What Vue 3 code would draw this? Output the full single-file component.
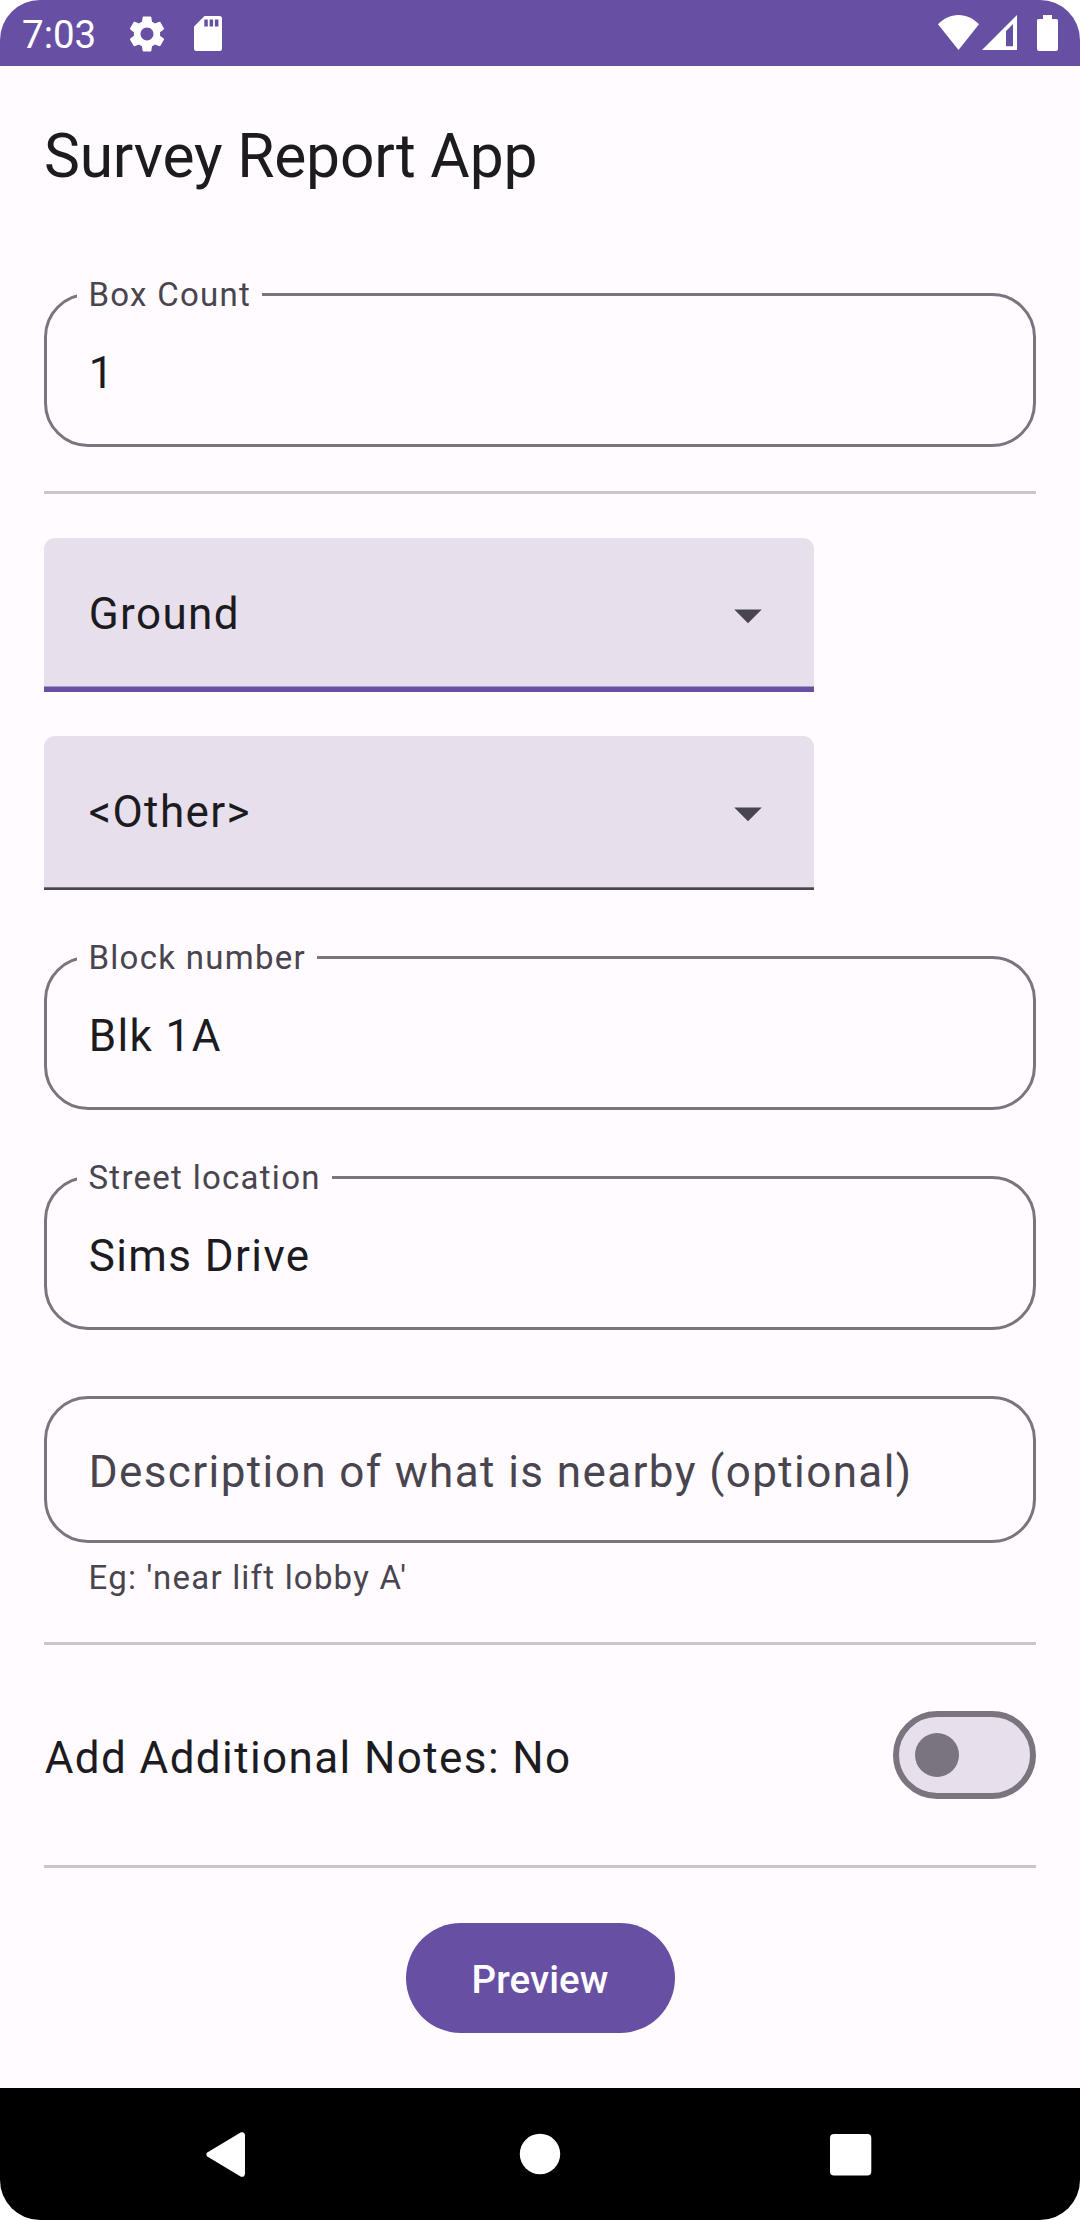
<script setup>
import { ref } from 'vue'

const boxCount = ref('1')
const dropdowns = ref([
  { value: 'Ground', active: true },
  { value: '<Other>', active: false },
])
const address = ref([
  { label: 'Block number', value: 'Blk 1A' },
  { label: 'Street location', value: 'Sims Drive' },
])
const notes = ref(false)
</script>

<template>
  <div class="screen">
    <header class="status">
      <div class="status-left">
        <span class="time">7:03</span>
        <svg class="gear" viewBox="0 0 24 24" width="42" height="42"><path fill="#fff" d="M19.43 12.98c.04-.32.07-.64.07-.98s-.03-.66-.07-.98l2.11-1.65c.19-.15.24-.42.12-.64l-2-3.46c-.12-.22-.39-.3-.61-.22l-2.49 1c-.52-.4-1.08-.73-1.69-.98l-.38-2.65C14.46 2.18 14.25 2 14 2h-4c-.25 0-.46.18-.49.42l-.38 2.65c-.61.25-1.17.59-1.69.98l-2.49-1c-.23-.09-.49 0-.61.22l-2 3.46c-.13.22-.07.49.12.64l2.11 1.65c-.04.32-.07.65-.07.98s.03.66.07.98l-2.11 1.65c-.19.15-.24.42-.12.64l2 3.46c.12.22.39.3.61.22l2.49-1c.52.4 1.08.73 1.69.98l.38 2.65c.03.24.24.42.49.42h4c.25 0 .46-.18.49-.42l.38-2.65c.61-.25 1.17-.59 1.69-.98l2.49 1c.23.09.49 0 .61-.22l2-3.46c.12-.22.07-.49-.12-.64l-2.11-1.65zM12 15.7c-2.04 0-3.7-1.66-3.7-3.7s1.66-3.7 3.7-3.7 3.7 1.66 3.7 3.7-1.66 3.7-3.7 3.7z"/></svg>
        <svg class="sd" viewBox="0 0 28 35" width="28" height="35"><path fill="#fff" fill-rule="evenodd" d="M10.5 0H25.5Q28 0 28 2.5V32.5Q28 35 25.5 35H2.5Q0 35 0 32.5V10.5ZM10.3 3.5V10.5H13.8V3.5ZM15.6 3.5V10.5H19.1V3.5ZM20.9 3.5V10.5H24.4V3.5Z"/></svg>
      </div>
      <div class="status-right">
        <svg viewBox="0 0 41 35" width="41" height="35"><path fill="#fff" d="M0 9.3C5.5 3.5 12.5 0 20.5 0S35.5 3.5 41 9.3L20.5 35Z"/></svg>
        <svg class="signal" viewBox="0 0 35 35" width="35" height="35"><path fill="#fff" fill-rule="evenodd" d="M35 0V35H0ZM24 16V31.3H31V9Z"/></svg>
        <svg class="battery" viewBox="0 0 21 36" width="21" height="36"><path fill="#fff" d="M6 0H15V4H19.5Q21 4 21 5.5V34Q21 36 19 36H2Q0 36 0 34V5.5Q0 4 1.5 4H6Z"/></svg>
      </div>
    </header>

    <main class="content">
      <h1 class="title">Survey Report App</h1>

      <div class="field">
        <span class="label">Box Count</span>
        <span class="value">{{ boxCount }}</span>
      </div>

      <div class="divider first"></div>

      <div v-for="d in dropdowns" :key="d.value" class="dropdown" :class="{ active: d.active }">
        <span class="value">{{ d.value }}</span>
        <svg viewBox="0 0 24 24" width="66" height="66"><path fill="#49454f" d="M7 10l5 5 5-5z"/></svg>
      </div>

      <div v-for="f in address" :key="f.label" class="field address">
        <span class="label">{{ f.label }}</span>
        <span class="value">{{ f.value }}</span>
      </div>

      <div class="field description">
        <span class="value placeholder">Description of what is nearby (optional)</span>
      </div>
      <p class="helper">Eg: 'near lift lobby A'</p>

      <div class="divider second"></div>

      <div class="notes">
        <span class="value">Add Additional Notes: {{ notes ? 'Yes' : 'No' }}</span>
        <button class="switch" type="button" role="switch" :aria-checked="notes" @click="notes = !notes">
          <span class="thumb"></span>
        </button>
      </div>

      <div class="divider third"></div>

      <button class="preview" type="button">Preview</button>
    </main>

    <nav class="navbar">
      <svg viewBox="0 0 48 48" width="48" height="48"><path fill="#fff" d="M43 5.2V43.8Q42.6 47.6 39 46.7L5.3 26.4Q3.4 24.4 5.3 22.4L39 2.3Q42.6 1.4 43 5.2Z"/></svg>
      <svg viewBox="0 0 48 48" width="48" height="48"><circle cx="24" cy="24" r="20.2" fill="#fff"/></svg>
      <svg viewBox="0 0 48 48" width="48" height="48"><rect x="0" y="4" width="41.3" height="41.5" rx="4" fill="#fff"/></svg>
    </nav>
  </div>
</template>

<style>
body {
  margin: 0;
  background: #fff;
}
</style>

<style scoped>
.screen {
  width: 1080px;
  height: 2220px;
  display: flex;
  flex-direction: column;
  overflow: hidden;
  border-radius: 40px;
  background: #fffbff;
  color: #1c1b1f;
  font-family: Roboto, 'Liberation Sans', sans-serif;
}
svg {
  display: block;
  flex: none;
}
.status {
  height: 66px;
  flex: none;
  display: flex;
  justify-content: space-between;
  background: #6750a4;
  color: #fff;
}
.status-left,
.status-right {
  display: flex;
  align-items: center;
}
.status-left {
  padding-left: 22px;
}
.status-right {
  align-items: flex-start;
  padding: 15px 22px 0 0;
}
.time {
  width: 74px;
  margin-top: 4px;
  font-size: 38.5px;
  line-height: 46px;
}
.gear {
  margin-left: 29.5px;
  margin-top: 1px;
}
.sd {
  margin-left: 26px;
  margin-top: 1px;
}
.signal {
  margin-left: 3.5px;
}
.battery {
  margin-left: 20px;
}
.content {
  flex: 1;
  display: flex;
  flex-direction: column;
  padding: 0 44px;
}
.title {
  box-sizing: border-box;
  height: 176px;
  margin: 0 0 51px;
  padding-top: 5px;
  font-size: 60.5px;
  font-weight: 400;
  line-height: 171px;
  letter-spacing: -0.2px;
}
.value {
  padding-left: 0.7px;
  font-size: 44px;
  line-height: 66px;
  letter-spacing: 1.4px;
  white-space: nowrap;
}
.field {
  position: relative;
  box-sizing: border-box;
  height: 154px;
  flex: none;
  display: flex;
  align-items: center;
  padding: 6px 41px 0;
  border: 3px solid #79747e;
  border-radius: 44px;
}
.label {
  position: absolute;
  left: 30px;
  top: -21px;
  padding: 0 11px 0 11.5px;
  background: #fffbff;
  color: #49454f;
  font-size: 33px;
  line-height: 39px;
  letter-spacing: 1.27px;
  white-space: nowrap;
}
.divider {
  height: 3px;
  flex: none;
  background: #cac4d0;
}
.first {
  margin: 44px 0;
}
.dropdown {
  box-sizing: border-box;
  width: 770px;
  height: 154px;
  flex: none;
  display: flex;
  align-items: center;
  justify-content: space-between;
  padding: 0 33px 0 44px;
  border-radius: 11px 11px 0 0;
  background: linear-gradient(#79747e 1px, #49454f 1px) bottom / 100% 3px no-repeat, #e7e0ec;
}
.dropdown .value {
  margin-top: -2px;
}
.dropdown.active {
  margin-bottom: 44px;
  background: linear-gradient(#a798c8 1px, #6750a4 1px) bottom / 100% 6px no-repeat, #e7e0ec;
}
.address {
  margin-top: 66px;
}
.description {
  height: 147px;
  margin-top: 66px;
  padding-top: 5px;
}
.placeholder {
  color: #49454f;
}
.helper {
  margin: 15px 0 0 44.5px;
  color: #49454f;
  font-size: 33px;
  line-height: 39px;
  letter-spacing: 1.2px;
}
.second {
  margin-top: 45px;
}
.notes {
  display: flex;
  align-items: center;
  justify-content: space-between;
  height: 88px;
  flex: none;
  margin: 66px 0;
}
.notes .value {
  padding-top: 6px;
}
.switch {
  box-sizing: border-box;
  width: 143px;
  height: 88px;
  display: flex;
  align-items: center;
  padding: 0 16px;
  border: 6px solid #79747e;
  border-radius: 44px;
  background: #e7e0ec;
}
.thumb {
  width: 44px;
  height: 44px;
  border-radius: 50%;
  background: #79747e;
}
.preview {
  box-sizing: border-box;
  width: 269px;
  height: 110px;
  flex: none;
  align-self: center;
  margin-top: 55px;
  padding: 3px 0 0;
  border: 0;
  border-radius: 55px;
  background: #6750a4;
  color: #fff;
  font: 500 38.5px/55px Roboto, 'Liberation Sans', sans-serif;
  letter-spacing: 0.1px;
}
.navbar {
  box-sizing: border-box;
  height: 132px;
  flex: none;
  display: flex;
  align-items: center;
  justify-content: space-between;
  padding: 0 202px;
  background: #000;
}
</style>
